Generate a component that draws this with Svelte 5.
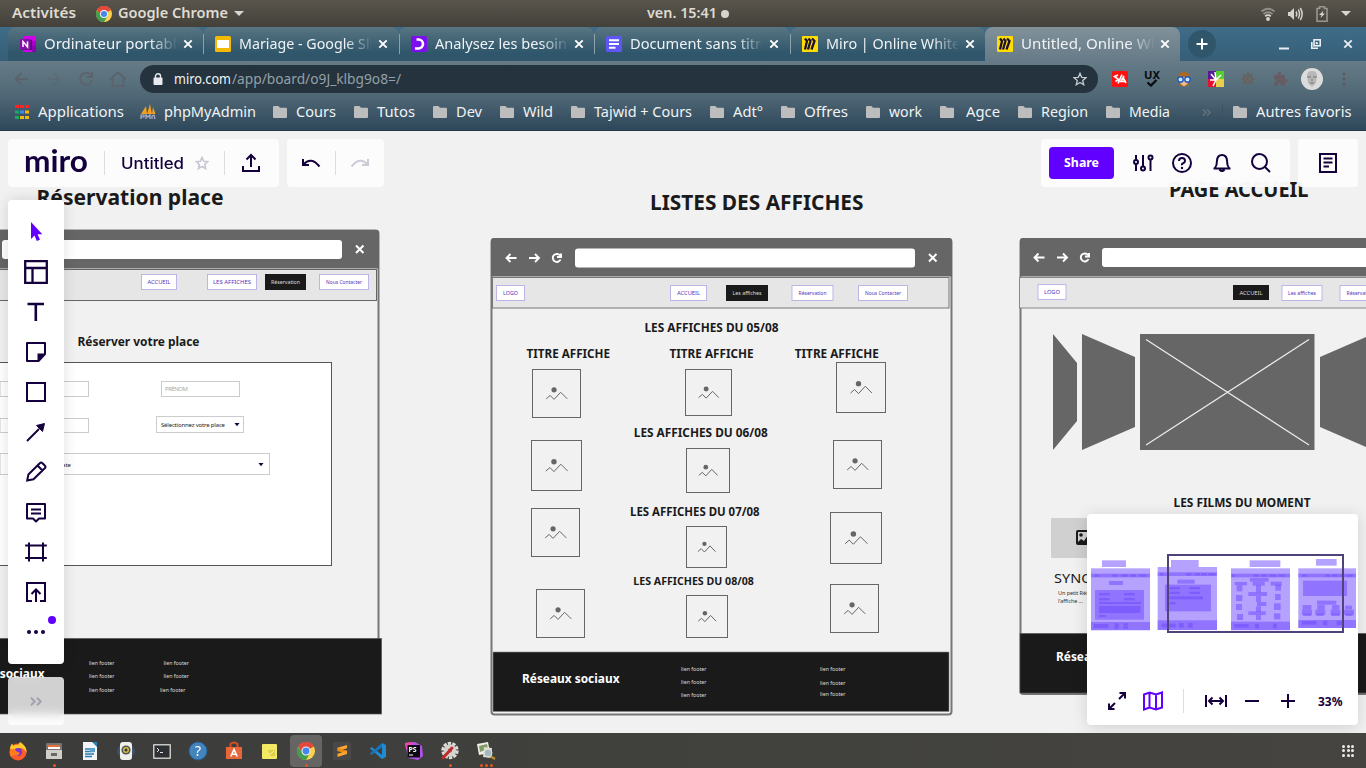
<script>
  const tabs = [
    { icon: 'onenote', title: 'Ordinateur portable', w: 141 },
    { icon: 'slides', title: 'Mariage - Google Slid', w: 143 },
    { icon: 'oc', title: 'Analysez les besoins', w: 139 },
    { icon: 'forms', title: 'Document sans titre', w: 139 },
    { icon: 'miro', title: 'Miro | Online Whiteb', w: 143 },
    { icon: 'miro', title: 'Untitled, Online Whi', w: 143, active: true }
  ];

  const bookmarks = [
    { label: 'Cours', w: 40 },
    { label: 'Tutos', w: 38 },
    { label: 'Dev', w: 26 },
    { label: 'Wild', w: 30 },
    { label: 'Tajwid + Cours', w: 98 },
    { label: 'Adt°', w: 30 },
    { label: 'Offres', w: 44 },
    { label: 'work', w: 33 },
    { label: 'Agce', w: 34, pad: 3 },
    { label: 'Region', w: 47 },
    { label: 'Media', w: 41 }
  ];

  const headings = [
    ['Réservation place', 36.5, 205, 187, 21.5],
    ['LISTES DES AFFICHES', 650, 210, 213.5, 21],
    ['PAGE ACCUEIL', 1169, 197, 139.5, 21],
    ['Réserver votre place', 77.5, 346, 122, 12.6],
    ['LES AFFICHES DU 05/08', 644.5, 332, 134, 12.6],
    ['TITRE AFFICHE', 526.5, 358, 83.5, 12.6],
    ['TITRE AFFICHE', 669.5, 358, 84, 12.6],
    ['TITRE AFFICHE', 794.8, 358, 84, 12.6],
    ['LES AFFICHES DU 06/08', 633.8, 437, 134, 12.6],
    ['LES AFFICHES DU 07/08', 630, 516, 129.5, 12.4],
    ['LES AFFICHES DU 08/08', 633.3, 585, 120.5, 11.4],
    ['LES FILMS DU MOMENT', 1173.5, 507, 137, 12.8]
  ];

  const images = [
    [532, 369, 49, 49], [685, 369, 47, 47], [836, 362, 50, 51],
    [531, 440, 51, 51], [686, 448, 44, 45], [833, 440, 49, 49],
    [531, 508, 49, 49], [686, 526, 41, 42], [830, 512, 52, 52],
    [536, 589, 49, 49], [686, 595, 42, 43], [830, 584, 49, 49]
  ];

  const buttons = [
    ['ACCUEIL', 141, 274, 36, 16, 23],
    ['LES AFFICHES', 207, 274, 50, 16, 38],
    ['Réservation', 265, 274, 41, 16, 29, true],
    ['Nous Contacter', 319, 274, 50, 16, 36],
    ['LOGO', 496, 285, 29, 16, 15],
    ['ACCUEIL', 670, 285, 37, 16, 23],
    ['Les affiches', 726, 285, 42, 16, 29, true],
    ['Réservation', 791.5, 285, 42, 16, 28],
    ['Nous Contacter', 858, 285, 50, 16, 36],
    ['LOGO', 1037.5, 284, 29, 16, 16],
    ['ACCUEIL', 1233, 285, 36, 15, 23, true],
    ['Les affiches', 1281.5, 285, 41, 16, 28],
    ['Réservation', 1339.5, 285, 42, 16, 28]
  ];

  const links = [
    [89, 665], [89, 678], [89, 692], [163.5, 665], [163.5, 678], [160, 692],
    [681, 671], [681, 684], [681, 697], [820, 671], [820, 685], [820, 696]
  ];

  const mini = [
    [186, 151, 72, 20], [153, 175, 177, 186], [153, 191, 177, 11], [164, 194, 14, 6], [217, 194, 16, 6], [243, 194, 20, 6], [270, 194, 18, 6], [297, 194, 22, 6],
    [207, 213, 42, 12], [165, 240, 147, 89], [177, 249, 32, 7], [252, 249, 32, 7], [177, 264, 32, 7], [252, 264, 32, 7], [177, 276, 126, 6], [177, 288, 124, 21], [177, 315, 21, 6],
    [153, 336, 177, 24], [161, 342, 44, 12], [224, 340, 12, 16], [250, 340, 14, 7], [250, 349, 14, 7],
    [393, 150, 83, 21], [353, 171, 178, 189], [353, 187, 178, 11], [360, 190, 10, 6], [438, 190, 16, 6], [464, 190, 16, 6], [484, 190, 16, 6], [505, 190, 22, 6],
    [412, 209, 52, 12], [375, 224, 138, 80], [388, 231, 32, 7], [448, 231, 32, 7], [388, 245, 32, 7], [448, 245, 32, 7], [388, 259, 101, 9], [388, 276, 19, 7],
    [353, 331, 178, 29], [365, 341, 42, 11], [417, 339, 14, 14], [444, 339, 14, 14],
    [629, 151, 92, 20], [573, 175, 177, 186], [573, 191, 177, 11], [576, 194, 10, 6], [641, 194, 16, 6], [664, 194, 16, 6], [689, 194, 20, 6], [716, 194, 18, 6],
    [630, 204, 56, 11], [584, 216, 37, 10], [638, 215, 36, 12], [692, 215, 33, 12], [590, 226, 17, 18], [648, 226, 15, 21], [706, 224, 17, 18], [588, 255, 19, 18], [648, 258, 15, 18], [705, 252, 17, 18],
    [625, 246, 56, 12], [588, 282, 18, 18], [648, 289, 15, 17], [702, 280, 20, 20], [651, 276, 28, 12], [625, 304, 52, 11], [591, 312, 18, 18], [648, 315, 15, 15], [702, 310, 19, 18],
    [573, 335, 177, 25], [582, 342, 44, 11], [645, 341, 12, 14], [699, 341, 11, 14],
    [828, 147, 62, 20], [775, 175, 173, 179], [775, 191, 173, 11], [786, 194, 14, 6], [856, 194, 14, 6], [876, 194, 16, 6], [898, 194, 16, 6], [920, 194, 18, 6],
    [789, 212, 132, 46], [831, 272, 58, 12], [788, 285, 26, 14], [832, 285, 22, 14], [876, 285, 22, 14], [915, 287, 21, 11], [786, 299, 30, 15], [826, 299, 30, 15], [872, 299, 29, 15], [912, 299, 30, 15], [789, 311, 25, 7], [829, 311, 22, 7], [874, 311, 25, 7], [916, 311, 22, 7],
    [775, 330, 173, 24], [786, 333, 43, 11], [849, 332, 13, 14], [890, 332, 20, 14]
  ];

  const dock = ['firefox', 'files', 'writer', 'rhythmbox', 'terminal', 'help', 'software', 'notes', 'chrome', 'sublime', 'vscode', 'phpstorm', 'settings', 'viewer'];
  const running = { files: 1, chrome: 1, settings: 1, viewer: 3 };
  const tools = ['select', 'template', 'text', 'sticky', 'shape', 'line', 'pen', 'comment', 'frame', 'upload', 'more'];
</script>

{#snippet fit(text, w, size, cls)}
  <svg class="fit {cls}" width={w} height="20"><text x="0" y="15" font-size={size} textLength={w} lengthAdjust="spacingAndGlyphs">{text}</text></svg>
{/snippet}

{#snippet chrome(size)}
  <svg width={size} height={size} viewBox="0 0 24 24">
    <circle cx="12" cy="12" r="12" fill="#fcd14d" />
    <path d="M12 12 L1.6 6 A12 12 0 0 1 22.4 6 Z" fill="#e2483b" />
    <path d="M12 6H22.5A12 12 0 0 0 1.6 6L7 15Z" fill="#e2483b" />
    <path d="M1.6 6A12 12 0 0 0 12 24L17.2 15 12 17 7 15Z" fill="#3f9e4f" />
    <circle cx="12" cy="12" r="6" fill="#f3f3f3" /><circle cx="12" cy="12" r="4.6" fill="#4587ee" />
  </svg>
{/snippet}

{#snippet folder()}
  <svg width="14" height="12" viewBox="0 0 14 12"><path d="M1 0H5.500L7 1.800H13Q14 1.800 14 2.800V11Q14 12 13 12H1Q0 12 0 11V1Q0 0 1 0Z" fill="#bdbdbd" /></svg>
{/snippet}

{#snippet favicon(name)}
  <svg width="16" height="16" viewBox="0 0 16 16">
    {#if name === 'onenote'}
      <rect x="3" width="13" height="16" fill="#d400e8" /><rect x="12" y="5" width="4" height="5" fill="#a800c8" /><rect x="12" y="10" width="4" height="6" fill="#8a00b0" />
      <rect x="2" y="4" width="10" height="10" fill="#5a0078" /><rect y="3" width="10.500" height="10.500" fill="#8410a8" />
      <path d="M3 11V5.500L7.500 11V5.500" stroke="#fff" stroke-width="1.500" fill="none" />
    {:else if name === 'slides'}
      <rect width="16" height="16" rx="1.500" fill="#f4b905" /><rect x="2" y="4" width="12" height="8" fill="#fff" />
    {:else if name === 'oc'}
      <rect width="16" height="16" rx="2" fill="#7b0ff0" /><path d="M5.500 3.500H7.500A4.300 4.300 0 0 1 7.500 12.500H4" fill="none" stroke="#fff" stroke-width="2.600" />
    {:else if name === 'forms'}
      <rect width="16" height="16" rx="1.500" fill="#5e57f5" /><path d="M3 4.200H13M3 8H13M3 11.800H9.500" stroke="#fff" stroke-width="1.900" />
    {:else}
      <rect width="16" height="16" rx="1" fill="#ffdd00" /><path d="M3 2.500L5 5 3 13.500M6.500 2.500L8.500 5 6 13.500M10 2.500L12.500 5 9.500 13.500" fill="none" stroke="#1c1033" stroke-width="2.300" />
    {/if}
  </svg>
{/snippet}

{#snippet cross(color)}
  <svg width="10" height="10" viewBox="0 0 10 10"><path d="M1.300 1.300L8.700 8.700M8.700 1.300L1.300 8.700" stroke={color} stroke-width="1.900" /></svg>
{/snippet}

{#snippet toolIcon(name)}
  <svg class="ico" width="24" height="24" viewBox="0 0 24 24">
    {#if name === 'select'}
      <path d="M7 2V19L10.500 15.500 12.800 21 16 19.800 13.600 14.300H18.300Z" fill="#6200ff" stroke="none" />
    {:else if name === 'template'}
      <path d="M1.200 1.200H22.800V22.800H1.200ZM1.200 8H22.800M8.500 8V22.500" stroke-width="2.300" />
    {:else if name === 'text'}
      <path d="M3.500 4H20M11.800 4V21" stroke-width="2.600" />
    {:else if name === 'sticky'}
      <path d="M3 3H21V14L14.500 21H3Z" stroke-linejoin="round" /><path d="M21 13.500H13.500V21Z" fill="#14003d" stroke="none" />
    {:else if name === 'shape'}
      <rect x="3" y="3" width="18" height="18" />
    {:else if name === 'line'}
      <path d="M3 21L15 9" /><path d="M20.500 3.500L18.500 11.500 12.500 5.500Z" fill="#14003d" stroke-width="1" />
    {:else if name === 'pen'}
      <path d="M3.200 20.500L4.400 14.500 16 3A1.500 1.500 0 0 1 18.200 3L21 5.800A1.500 1.500 0 0 1 21 8L9.500 19.300ZM13.500 5.500L18.500 10.500" />
    {:else if name === 'comment'}
      <path d="M3 4H21V18.500H15L12 21.500 9 18.500H3Z" stroke-linejoin="round" /><path d="M7 9.500H17M7 13.500H17" stroke-width="1.800" />
    {:else if name === 'frame'}
      <path d="M5 2.500V21.500M19 2.500V21.500M1.200 5.500H22.800M1.200 18H22.800" />
    {:else if name === 'upload'}
      <path d="M8 21H3V3H21V21H16M12 22V10M7.500 14L12 9.500 16.500 14" />
    {:else if name === 'more'}
      <g fill="#14003d" stroke="none"><circle cx="5" cy="12" r="2" /><circle cx="12" cy="12" r="2" /><circle cx="19" cy="12" r="2" /></g>
    {/if}
  </svg>
{/snippet}

{#snippet dockIcon(name)}
  {#if name === 'chrome'}
    {@render chrome(18)}
  {:else}
    <svg width="20" height="20" viewBox="0 0 20 20">
      {#if name === 'firefox'}
        <circle cx="10" cy="11" r="8.500" fill="#ff5a2a" /><path d="M2 8Q2 4 4.500 2.500L5 5Q8 3 10 4L12 1Q19 5 18.500 12 16 7 12 7L8 9Z" fill="#ffc928" /><circle cx="10" cy="11" r="4" fill="#7a35cf" /><path d="M2 9Q7 6 8 10L12 12Q10 16 6 14L3 16Q1 13 2 9Z" fill="#ff7b22" />
      {:else if name === 'files'}
        <rect x="2" y="2" width="16" height="16" rx="1" fill="#777572" /><rect x="4" y="4" width="12" height="3" fill="#e6703a" /><rect x="4" y="6" width="12" height="2" fill="#fff" /><rect x="2" y="9" width="16" height="9" fill="#d1cec8" /><rect x="7" y="12" width="6" height="3" fill="#6b6965" />
      {:else if name === 'writer'}
        <path d="M3 1H13L17 5V19H3Z" fill="#f1f5f8" /><path d="M12 1H17V6Z" fill="#2b7fb8" /><path d="M5 8H11M5 10.500H14M5 13H14M5 15.500H12" stroke="#2c7eb2" stroke-width="1.300" /><rect x="10" y="7" width="5" height="4" fill="#5b9fca" />
      {:else if name === 'rhythmbox'}
        <ellipse cx="10" cy="10" rx="9" ry="7" fill="#405366" /><rect x="4" y="1" width="12" height="18" rx="3" fill="#efefec" /><circle cx="10" cy="9" r="4.600" fill="#555" /><circle cx="10" cy="9" r="3" fill="#d1be4d" /><circle cx="10" cy="9" r="1.500" fill="#333" />
      {:else if name === 'terminal'}
        <rect x="1" y="3" width="18" height="15" rx="1" fill="#c8c8c4" /><rect x="2.500" y="4.500" width="15" height="12" fill="#2d3133" /><path d="M5 7L7 9 5 11M8 11.500H11" fill="none" stroke="#e2e2e2" />
      {:else if name === 'help'}
        <circle cx="10" cy="10" r="9" fill="#4484bd" stroke="#245e93" /><text x="10" y="15" font-size="14" fill="#fff" text-anchor="middle">?</text>
      {:else if name === 'software'}
        <path d="M2 6H18V18H2Z" fill="#e9663a" /><path d="M6.500 6V3Q10 0 13.500 3V6" fill="none" stroke="#d94e27" stroke-width="2" /><path d="M6.800 15.500L10 8.500 13.200 15.500M8 13.200H12" fill="none" stroke="#fff" stroke-width="1.600" />
      {:else if name === 'notes'}
        <rect x="2" y="3" width="15" height="15" rx="1" fill="#f3e963" /><path d="M8 9H15V15H10Z" fill="#ddcf48" /><path d="M9 14L14 10" stroke="#fff9b0" />
      {:else if name === 'sublime'}
        <rect x="1" y="1" width="18" height="18" rx="1" fill="#484848" /><path d="M15 4L5.500 6.800V10L15 7.200Z" fill="#ffa62b" /><path d="M5.500 6.800V10L15 13V9.800Z" fill="#f08a12" /><path d="M15 9.800L5.500 12.800V16L15 13Z" fill="#ffa62b" />
      {:else if name === 'vscode'}
        <path d="M14 2L18 4V16L14 18 2 7.500 3.500 6 14 14Z" fill="#208bd2" /><path d="M14 2V6L3.500 14 2 12.500Z" fill="#1577bd" />
      {:else if name === 'phpstorm'}
        <path d="M1 2L11 1 18 5 19 15 14 19 4 17Z" fill="#b551ec" /><path d="M1 2L9 1 6 10 2 8Z" fill="#ef4bab" /><rect x="3.500" y="4" width="12.500" height="12.500" fill="#0c0910" /><text x="4.500" y="10.500" font-size="7" font-weight="700" fill="#fff">PS</text><path d="M5 14H9" stroke="#fff" />
      {:else if name === 'settings'}
        <circle cx="10" cy="9.500" r="7.200" fill="none" stroke="#dedcd8" stroke-width="3" stroke-dasharray="3.300 1.200" /><circle cx="10" cy="9.500" r="6.300" fill="#d5d3cf" /><circle cx="10" cy="9.500" r="2" fill="#666" /><path d="M3 17L12 7" stroke="#c52c2c" stroke-width="3" stroke-linecap="round" />
      {:else}
        <path d="M1 3L12 1 14 12 3 14Z" fill="#f1efe5" /><path d="M3 5L11 3 12 8 4 11Z" fill="#7d9a66" /><path d="M8 6L16 7 15 17 7 16Z" fill="#dedccb" /><path d="M14 15L19 18" stroke="#b88d28" stroke-width="2.400" /><circle cx="12" cy="12" r="4" fill="#a4b8c2" stroke="#e4e4e0" />
      {/if}
    </svg>
  {/if}
{/snippet}

<div class="screen">
  <header class="system">
    <div class="sys-left">
      {@render fit('Activités', 64, 14, 'semi grey')}
      <div class="app">{@render chrome(16)}{@render fit('Google Chrome', 110, 14, 'semi grey')}<i class="caret"></i></div>
    </div>
    <div class="clock">{@render fit('ven. 15:41', 70, 13.5, 'semi grey')}<i class="dot"></i></div>
    <div class="sys-right">
      <svg width="16" height="16" viewBox="0 0 16 16" fill="none" stroke="#918f88" stroke-width="1.800"><path d="M1.500 5.500Q8 0 14.500 5.500M3.500 8Q8 4.500 12.500 8" /><path d="M5.200 10.300Q8 8 10.800 10.300" stroke="#d8d6d0" /><circle cx="8" cy="13" r="1.900" fill="#d8d6d0" stroke="none" /></svg>
      <svg width="16" height="16" viewBox="0 0 16 16" fill="none" stroke="#d5d3cd" stroke-width="1.500"><path d="M1 6H3L7 2V14L3 10H1Z" fill="#d5d3cd" stroke="none" /><path d="M9 5.500Q10.500 8 9 10.500M11.300 3.500Q13.700 8 11.300 12.500M13.300 2Q17 8 13.300 14" /></svg>
      <svg width="12" height="16" viewBox="0 0 12 16" fill="none" stroke="#99968f" stroke-width="1.600"><path d="M1 2.500H3.500V.8H8.500V2.500H11V15.200H1Z" /><path d="M7.500 4.500L3 9H5.500L4.500 12 9 7.500H6.500Z" fill="#d8d6d0" stroke="none" /></svg>
      <i class="caret"></i>
    </div>
  </header>

  <div class="browser">
    <div class="strip">
      {#each tabs as tab}
        <div class="tab" class:active={tab.active}>
          {@render favicon(tab.icon)}
          <div class="title">{@render fit(tab.title, tab.w, 14.3, 'light')}</div>
          {@render cross('#fff')}
        </div>
      {/each}
      <div class="new"><svg width="12" height="12"><path d="M6 .5V11.500M.5 6H11.500" stroke="#fff" stroke-width="2" /></svg></div>
      <div class="window-buttons">
        <svg width="10" height="12"><path d="M0 10.500H10" stroke="#e8eef2" stroke-width="2" /></svg>
        <svg width="10" height="10" fill="none" stroke="#e8eef2" stroke-width="1.600"><rect x="3" y=".8" width="6.200" height="6" /><path d="M.8 3V9.200H7M5.500 3V4.500H7" /></svg>
        {@render cross('#e8eef2')}
      </div>
    </div>

    <div class="toolbar">
      <svg class="nav" width="112" height="16" viewBox="0 0 112 16">
        <path d="M14 8H2M7.500 2L1.500 8 7.500 14" /><path d="M33 8H45M39.500 2L45.500 8 39.500 14" opacity=".45" />
        <path d="M77 4.500A6 6 0 1 0 78 9M78 1V6H73" /><path d="M96 8.500L104 1.500 112 8.500M98.500 7V15H109.500V7" />
      </svg>
      <div class="url">
        <svg width="10" height="12" viewBox="0 0 10 12"><rect x=".5" y="4.500" width="9" height="7.500" rx="1" fill="#e8eaed" /><path d="M2.500 5V3A2.500 2.200 0 0 1 7.500 3V5" fill="none" stroke="#e8eaed" stroke-width="1.400" /></svg>
        <div class="address">{@render fit('miro.com', 57, 14.3, 'light')}{@render fit('/app/board/o9J_klbg9o8=/', 169, 14.3, 'dim')}</div>
        <svg class="fav" width="14" height="14" viewBox="0 0 16 16"><path d="M8 1.500L9.900 6.100 14.900 6.500 11.100 9.700 12.300 14.600 8 12 3.700 14.600 4.900 9.700 1.100 6.500 6.100 6.100Z" fill="none" stroke="#c3c8cc" stroke-width="1.500" /></svg>
      </div>
      <div class="extensions">
        <svg width="16" height="16"><rect width="16" height="16" rx="1.500" fill="#f11" /><path d="M6 4L2.500 5.500 6.500 8.500 3.500 10.500M10 3.500L6 12.500M12 5L9 10.500H14M11.500 7.500L14 12" fill="none" stroke="#fff" stroke-width="1.700" /></svg>
        <svg width="16" height="16"><text x="0" y="8" font-size="10" font-weight="700" textLength="16" lengthAdjust="spacingAndGlyphs" fill="#080c0e">UX</text><path d="M3.500 11.500L7 14.500 12.500 9" fill="none" stroke="#080c0e" stroke-width="2.300" /></svg>
        <svg width="16" height="16"><path d="M2 9Q1 1 8 1T14 9L12 15H4Z" fill="#ad6a20" /><path d="M4 6H12V12L8 15.500 4 12Z" fill="#f0bd90" /><circle cx="4.500" cy="8.500" r="2.700" fill="#cfe5ff" stroke="#1b59bd" stroke-width="1.400" /><circle cx="11.500" cy="8.500" r="2.700" fill="#cfe5ff" stroke="#1b59bd" stroke-width="1.400" /></svg>
        <svg width="16" height="16"><rect width="8" height="8" fill="#561b96" /><rect x="8" width="8" height="8" fill="#55cf2d" /><rect y="8" width="8" height="8" fill="#e5112c" /><rect x="8" y="8" width="8" height="8" fill="#ead04a" /><path d="M8 9L3 3M8 9L7 1M8 9L13 4M8 9L2 9M8 9L5 15" stroke="#fff" stroke-width="1.500" /></svg>
        <svg width="16" height="16" fill="none" stroke="#68625f" stroke-width="2"><circle cx="8" cy="8" r="4" /><path d="M3 3L13 13M3 13L12 3M8 1V5M12 8H15M1 8H4" stroke-width="1.500" /></svg>
        <svg width="16" height="16"><path d="M2 4H6Q5 1 7.500 1T9 4H13V8Q16 7.500 15.500 10T13 11V15H9Q9 12 7 12T5.500 15H2V11Q4.500 11 4.500 9.500T2 8Z" fill="#655d63" /></svg>
        <svg width="22" height="22"><circle cx="11" cy="11" r="11" fill="#dcdcdc" /><path d="M6 8Q6 3 11 3T16 8L15 15 11 19 7 15Z" fill="#b7b7b7" /><path d="M6 9H10M12 9H16M9 15H13M10 12H12" stroke="#777" stroke-width="1.200" /></svg>
        <svg width="4" height="14" fill="#5b5a60"><circle cx="2" cy="2" r="1.500" /><circle cx="2" cy="7" r="1.500" /><circle cx="2" cy="12" r="1.500" /></svg>
      </div>
    </div>

    <div class="bookmarks">
      <div class="bookmark">
        <svg width="14" height="14"><path d="M0 1.500H4M5 1.500H9M10 1.500H14" stroke="#f22" stroke-width="3" /><path d="M0 7H4M0 12.500H4" stroke="#17a863" stroke-width="3" /><path d="M5 7H9" stroke="#4287f5" stroke-width="3" /><path d="M10 7H14M5 12.500H9M10 12.500H14" stroke="#f5b90c" stroke-width="3" /></svg>
        {@render fit('Applications', 86, 14.5, 'light')}
      </div>
      <div class="bookmark pma">
        <svg width="16" height="16"><path d="M1 10L6 2 7 10ZM7 10L10 0 12 10ZM12 10L13 3 15.500 10Z" fill="#f5a01c" /><path d="M1 15V11H4V13H1M6 15V11L8 13 10 11V15M12 15V12L14 11 15 15" fill="none" stroke="#aeb2cd" stroke-width="1.200" /></svg>
        {@render fit('phpMyAdmin', 92, 14.5, 'light')}
      </div>
      {#each bookmarks as b}
        <div class="bookmark">{@render folder()}<span style:width="{b.pad ?? 0}px" class="pad" class:none={!b.pad}></span>{@render fit(b.label, b.w, 14.5, 'light')}</div>
      {/each}
      <div class="rest">
        <svg width="9" height="7" viewBox="0 0 9 7" fill="none" stroke="#65757f" stroke-width="1.400"><path d="M1 .5L4 3.500 1 6.500M5 .5L8 3.500 5 6.500" /></svg>
        <i class="rule"></i>
        <div class="bookmark">{@render folder()}{@render fit('Autres favoris', 95.5, 14.5, 'light')}</div>
      </div>
    </div>
  </div>

  <main class="board">
    <svg class="canvas" width="1366" height="602" viewBox="0 131 1366 602">
      <!-- Reservation wireframe -->
      <rect x="-80" y="230.500" width="458.500" height="470" rx="3" fill="#f1f1f1" stroke="#777" stroke-width="2" />
      <path d="M-80 230H376Q379 230 379 233V268.500H-80Z" fill="#666" />
      <rect x="2" y="240" width="340" height="19" rx="3" fill="#fff" />
      <rect x="-80" y="269.500" width="456.500" height="31" fill="#e6e6e6" stroke="#666" />
      <path d="M356 245.500L363.500 253M363.500 245.500L356 253" stroke="#fff" stroke-width="2" />
      <rect x="-20" y="362.500" width="351.500" height="203" fill="#fff" stroke="#555" />
      <g fill="#fff" stroke="#ccc"><rect x="0" y="381.500" width="88.500" height="15" /><rect x="0" y="418.500" width="88.500" height="14" /><rect x="161.500" y="381.500" width="78" height="15" /><rect x="156.500" y="416.500" width="87" height="16" /><rect x="0" y="453.500" width="269.500" height="21" /></g>
      <g font-size="6"><text x="165" y="391" textLength="23" fill="#aaa">PRÉNOM</text><text x="161" y="426.500" textLength="64" fill="#222">Sélectionnez votre place</text><text x="71" y="466.500" text-anchor="end" fill="#222">Date</text></g>
      <path d="M234.500 423H239.500L237 426.300ZM258.500 463H263.500L261 466.300Z" fill="#14003d" />
      <rect x="-5" y="638.500" width="386.500" height="75.500" fill="#1a1a1a" stroke="#555" stroke-width=".7" />

      <!-- Poster list wireframe -->
      <rect x="491.500" y="239" width="460" height="475.500" rx="3" fill="#f1f1f1" stroke="#777" stroke-width="2" />
      <path d="M491 276.500V241Q491 238 494 238H949Q952 238 952 241V276.500Z" fill="#666" />
      <rect x="492.500" y="277.500" width="456.500" height="30.500" fill="#e6e6e6" stroke="#777" />
      <rect x="575" y="248.500" width="340" height="19" rx="3" fill="#fff" />
      <rect x="493" y="652" width="456" height="59.500" fill="#1a1a1a" stroke="#888" stroke-width=".6" />
      <g fill="none" stroke="#fff" stroke-width="2">
        <path d="M929 254L936.500 261.500M936.500 254L929 261.500" />
        <path id="arrows" d="M516.500 258H507M510.500 254L506.500 258 510.500 262M529 258H538.500M535 254L539 258 535 262M560 255.500A4 4 0 1 0 560.500 259.500M561 253.500V257H557" stroke-width="1.900" />
      </g>

      <!-- Home wireframe -->
      <rect x="1020.500" y="239" width="400" height="455" rx="3" fill="#f1f1f1" stroke="#777" stroke-width="2" />
      <path d="M1020 276.500V241Q1020 238 1023 238H1370V276.500Z" fill="#666" />
      <rect x="1019.500" y="277.500" width="400" height="30.500" fill="#e6e6e6" stroke="#888" />
      <rect x="1102" y="248" width="340" height="19" rx="3" fill="#fff" />
      <use href="#arrows" x="528" y="-.5" fill="none" stroke="#fff" />
      <g fill="#666"><path d="M1053 334L1077 363V421L1053 450ZM1082 334L1135 357V427L1082 450ZM1140 334H1314.500V450H1140ZM1320 357L1373 334V450L1320 427Z" /></g>
      <path d="M1146 339.500L1309 445M1309 339.500L1146 445" stroke="#eee" stroke-width="1.200" />
      <rect x="1051" y="518" width="60" height="40" fill="#d0d0d0" />
      <rect x="1077" y="531" width="14" height="13" rx="1" fill="none" stroke="#1a1a1a" stroke-width="2" /><circle cx="1081" cy="535" r="1.800" fill="#1a1a1a" /><path d="M1077 543L1081 539 1084 541 1088 535V544Z" fill="#1a1a1a" />
      <text x="1054" y="583" font-size="13" fill="#1a1a1a" textLength="68" lengthAdjust="spacingAndGlyphs">SYNOPSIS</text>
      <g font-size="5.500" fill="#333"><text x="1058" y="595" textLength="42">Un petit Résumé</text><text x="1058" y="603" textLength="25">l'affiche ...</text></g>
      <rect x="1020" y="633.500" width="400" height="59.500" fill="#1a1a1a" stroke="#555" stroke-width=".7" />

      {#each buttons as [label, x, y, w, h, tw, dark]}
        <rect x={x + 0.5} y={y + 0.5} width={w - 1} height={h - 1} fill={dark ? '#1a1a1a' : '#fff'} stroke={dark ? '#1a1a1a' : '#bfb4e8'} />
        <text x={x + (w - tw) / 2} y={y + 10} font-size="5.600" textLength={tw} lengthAdjust="spacingAndGlyphs" fill={dark ? '#ddd' : '#5333bd'}>{label}</text>
      {/each}
      {#each images as [x, y, w, h]}
        <rect x={x + 0.5} y={y + 0.5} width={w - 1} height={h - 1} fill="none" stroke="#666" />
        <circle cx={x + w * 0.45} cy={y + h * 0.425} r={w * 0.053} fill="#666" />
        <polyline points="{x + w * 0.29},{y + h * 0.61} {x + w * 0.37},{y + h * 0.54} {x + w * 0.45},{y + h * 0.62} {x + w * 0.585},{y + h * 0.475} {x + w * 0.72},{y + h * 0.61}" fill="none" stroke="#666" />
      {/each}
      {#each headings as [label, x, y, w, size]}
        <text {x} {y} font-size={size} font-weight="700" textLength={w} lengthAdjust="spacingAndGlyphs" fill="#1a1a1a">{label}</text>
      {/each}
      {#each links as [x, y]}
        <text {x} {y} font-size="5.600" textLength="25.500" lengthAdjust="spacingAndGlyphs" fill="#ddd">lien footer</text>
      {/each}
      <g font-size="12.600" font-weight="700" fill="#fff">
        <text x="-53" y="678" textLength="97.500" lengthAdjust="spacingAndGlyphs">Réseaux sociaux</text>
        <text x="522" y="683" textLength="97.500" lengthAdjust="spacingAndGlyphs">Réseaux sociaux</text>
        <text x="1056" y="661" textLength="97.500" lengthAdjust="spacingAndGlyphs">Réseaux sociaux</text>
      </g>
    </svg>

    <div class="overlay top">
      <div class="panel brand">
        <svg class="logo" width="64" height="30"><text x="0" y="24" font-size="30" font-weight="700" textLength="64" lengthAdjust="spacingAndGlyphs">miro</text></svg>
        <i class="sep"></i>
        <div class="name">{@render fit('Untitled', 63, 15.5, 'ink')}
          <svg width="14" height="14" viewBox="0 0 16 16"><path d="M8 1.800L9.900 6.100 14.500 6.500 11.100 9.700 12.100 14.300 8 12 3.900 14.300 4.900 9.700 1.500 6.500 6.100 6.100Z" fill="none" stroke="#c9c6d3" stroke-width="1.900" /></svg></div>
        <i class="sep"></i>
        <svg class="ico" width="20" height="20" viewBox="0 0 20 20"><path d="M2 13V18H18V13M10 14V3M5.500 6.500L10 2 14.500 6.500" /></svg>
      </div>
      <div class="panel history">
        <svg class="ico" width="20" height="16" viewBox="0 0 20 16"><path d="M2 4V10H8M2.500 9.500Q10 1 18.500 11.500" /></svg>
        <i class="sep"></i>
        <svg class="ico pale" width="20" height="16" viewBox="0 0 20 16"><path d="M18 4V10H12M17.500 9.500Q10 1 1.500 11.500" /></svg>
      </div>
      <div class="panel actions">
        <div class="share">{@render fit('Share', 35, 12.6, 'bold')}</div>
        <svg class="ico" width="22" height="20" viewBox="0 0 22 20"><path d="M4 2V6.500M4 11.500V18M11 2V13M18.500 7V18" /><circle cx="4" cy="9" r="2" /><circle cx="11" cy="15.500" r="2" /><circle cx="18.500" cy="4.500" r="2" /></svg>
        <svg class="ico" width="22" height="22" viewBox="0 0 22 22"><circle cx="11" cy="11" r="9" /><path d="M8 9Q8 6 11 6T14 8.800Q14 10.500 12.300 11.200T11 13.300" /><circle cx="11" cy="16" r="1.200" fill="#14003d" stroke="none" /></svg>
        <svg class="ico" width="22" height="22" viewBox="0 0 22 22"><path d="M2.500 16.500H19.500M4 16Q6 13.500 6 8.500 6.500 3 11 3T16 8.500Q16 13.500 18 16M8.500 17.500Q11 20.500 13.500 17.500" /></svg>
        <svg class="ico" width="22" height="22" viewBox="0 0 22 22"><circle cx="9.500" cy="9.500" r="7.500" /><path d="M15 15L20 20" /></svg>
      </div>
      <div class="panel sheet">
        <svg class="ico" width="20" height="22" viewBox="0 0 20 22"><path d="M2 2H18V20H2Z" /><path d="M5.500 6.500H14.500M5.500 10.500H14.500M5.500 14.500H11" stroke-width="1.800" /></svg>
      </div>
    </div>

    <div class="overlay tools">
      {#each tools as t}
        <div class="tool">{@render toolIcon(t)}{#if t === 'more'}<i class="badge"></i>{/if}</div>
      {/each}
    </div>
    <div class="overlay expand"><svg width="12" height="9" viewBox="0 0 12 9" fill="none" stroke="#a5a2b0" stroke-width="2"><path d="M1 .8L4.800 4.500 1 8.200M7 .8L10.800 4.500 7 8.200" /></svg></div>

    <div class="overlay minimap">
      <svg width="271" height="163" viewBox="141 12 813 489">
        {#each mini as [x, y, width, height]}
          <rect {x} {y} {width} {height} fill="#6b45ff" opacity=".5" />
        {/each}
        <rect x="384" y="135" width="525" height="231" fill="none" stroke="#50427a" stroke-width="6" />
      </svg>
      <div class="zoombar">
        <svg class="ico" width="20" height="20" viewBox="0 0 20 20"><path d="M12 8L17.500 2.500M12.500 2H18V7.500M8 12L2.500 17.500M2 12.500V18H7.500" /></svg>
        <svg class="ico violet" width="22" height="20" viewBox="0 0 22 20"><path d="M2 3.500L7.500 1.500 14 3.500 20 1.500V16.500L14 18.500 7.500 16.500 2 18.500ZM7.500 1.500V16.500M14 3.500V18.500" /></svg>
        <i class="sep"></i>
        <svg class="ico" width="24" height="14" viewBox="0 0 24 14"><path d="M2 1V13M22 1V13M5 7H19M8.500 3.500L5 7 8.500 10.500M15.500 3.500L19 7 15.500 10.500" /></svg>
        <svg class="ico" width="14" height="14"><path d="M0 7H14" /></svg>
        <svg class="ico" width="14" height="14"><path d="M0 7H14M7 0V14" /></svg>
        {@render fit('33%', 24.5, 12, 'bold ink')}
      </div>
    </div>
  </main>

  <footer class="dock">
    {#each dock as d}
      <div class="launcher" class:current={d === 'chrome'}>
        {@render dockIcon(d)}
        <div class="dots">{#each Array(running[d] ?? 0) as _}<i></i>{/each}</div>
      </div>
    {/each}
    <div class="grid">{#each Array(9) as _}<i></i>{/each}</div>
  </footer>
</div>

<style>
  :global(body) { margin: 0; overflow: hidden; }
  .screen { width: 1366px; height: 768px; display: flex; flex-direction: column; font-family: 'Noto Sans', 'Open Sans', sans-serif; overflow: hidden; }
  svg { display: block; flex: none; }
  i { display: block; flex: none; }
  .fit { overflow: visible; font-family: 'Noto Sans', 'Open Sans', sans-serif; }
  .grey { fill: #dfdbd2; }
  .light { fill: #f0f3f5; }
  .dim { fill: #94a0a8; }
  .semi { font-weight: 600; }
  .bold { font-weight: 700; fill: #fff; }
  .ink { fill: #14003d; }
  .ink:not(.bold) { font-family: Inter, sans-serif; font-weight: 500; margin-top: 1px; }

  .system { height: 27px; display: grid; grid-template-columns: 1fr auto 1fr; align-items: center; background: linear-gradient(#59554d, #43413a); box-sizing: border-box; padding: 0 15px 0 12px; }
  .sys-left, .app, .clock, .sys-right { display: flex; align-items: center; }
  .sys-left { gap: 20px; }
  .app { gap: 6px; }
  .clock { gap: 4px; padding-left: 13px; }
  .sys-left .fit, .clock .fit { margin-top: -1px; }
  .sys-right { justify-content: flex-end; gap: 13px; }
  .sys-right svg:first-child { margin-right: -2px; }
  .caret { border: 5px solid transparent; border-top-color: #d8d6d0; border-bottom: 0; }
  .dot { width: 8px; height: 8px; border-radius: 50%; background: #d6d3cc; }

  .browser { height: 104px; background: linear-gradient(#80919a, #667b87 34px, #506876 68px, #2e475a 103px, #26374a 103px); }
  .strip { height: 34px; display: flex; background: linear-gradient(#3f6c88, #365e78); padding-left: 8px; }
  .tab { width: 195.4px; height: 34px; box-sizing: border-box; display: flex; align-items: center; padding-left: 12px; background: linear-gradient(#587582, #2f566b 26px); border-radius: 8px 8px 0 0; position: relative; }
  .tab:not(:first-child):not(.active)::before { content: ''; position: absolute; left: 0; top: 7px; width: 1px; height: 20px; background: #8ca0ab; }
  .tab.active { background: linear-gradient(#80919a, #667b87); }
  .title { width: 132px; margin: 0 7px 0 8px; height: 20px; overflow: hidden; mask-image: linear-gradient(90deg, #000 106px, transparent 134px); }
  .new { width: 28px; height: 28px; margin: 3px 0 0 8px; border-radius: 50%; background: #2f566b; display: grid; place-items: center; }
  .window-buttons { display: flex; align-items: center; gap: 22px; margin-left: auto; padding-right: 13px; }

  .toolbar { height: 36px; display: flex; align-items: center; padding-left: 14px; }
  .nav { fill: none; stroke: #5c636b; stroke-width: 1.8; }
  .url { width: 958px; height: 28px; margin-left: 14px; box-sizing: border-box; border-radius: 14px; background: #24333d; display: flex; align-items: center; padding: 0 11px 0 13px; }
  .address { display: flex; gap: 1px; margin-left: 11px; }
  .fav { margin-left: auto; }
  .extensions { flex: 1; display: flex; align-items: center; gap: 16px; padding-left: 14px; }
  .extensions svg:nth-child(7) { margin-left: -3px; }
  .extensions svg:nth-child(8) { margin-left: 3px; }

  .bookmarks { height: 33px; box-sizing: border-box; display: flex; align-items: center; gap: 18px; padding: 0 15px 3px; }
  .bookmark { display: flex; align-items: center; gap: 9px; }
  .pma { gap: 8px; margin-left: -2px; }
  .bookmark:nth-child(3) { margin-left: -1px; }
  .pad.none { display: none; }
  .pad { margin-right: -9px; }
  .rest { display: flex; align-items: center; margin-left: auto; gap: 11px; }
  .rule { width: 1px; height: 14px; background: #3b5263; }

  .board { height: 602px; position: relative; background: #f1f1f1; overflow: hidden; }
  .canvas text { font-family: 'Noto Sans', 'Open Sans', sans-serif; }
  .overlay { position: absolute; }
  .ico { fill: none; stroke: #14003d; stroke-width: 2; }
  .pale { stroke: #cecbd7; }
  .violet { stroke: #6200ff; }
  .sep { width: 1px; height: 24px; background: #dddce2; }
  .top { left: 8px; right: 8px; top: 8px; display: flex; gap: 8px; }
  .panel { height: 48px; box-sizing: border-box; border-radius: 4px; background: rgba(253, 253, 253, 0.93); backdrop-filter: blur(8px); display: flex; align-items: center; }
  .brand { width: 271px; padding: 0 18px 0 16px; justify-content: space-between; }
  .logo text { font-family: Lato, sans-serif; fill: #14003d; }
  .name { display: flex; align-items: center; gap: 11px; }
  .history { width: 97px; padding: 0 14px; justify-content: space-between; }
  .actions { width: 249px; margin-left: auto; padding: 0 18px 0 8px; justify-content: space-between; }
  .share { width: 65px; height: 32px; border-radius: 4px; background: #6200ff; display: grid; place-items: center; }
  .share .fit { margin-top: -2px; }
  .sheet { width: 60px; justify-content: center; }
  .tools { left: 8px; top: 69px; width: 56px; height: 464px; box-sizing: border-box; padding-top: 12px; border-radius: 4px; background: #fff; box-shadow: 0 0 14px rgba(0, 0, 0, 0.13); }
  .tool { height: 40px; display: grid; place-items: center; position: relative; }
  .badge { position: absolute; right: 8px; top: 4px; width: 8px; height: 8px; border-radius: 50%; background: #6200ff; }
  .expand { left: 8px; top: 546px; width: 56px; height: 48px; border-radius: 4px; background: rgba(255, 255, 255, 0.8); backdrop-filter: blur(5px); display: grid; place-items: center; }
  .minimap { left: 1087px; top: 383px; width: 271px; height: 211px; border-radius: 4px; background: #fff; box-shadow: 0 2px 16px rgba(0, 0, 0, 0.14); }
  .zoombar { height: 48px; display: grid; grid-template-columns: 36px 36px 25px 40px 32px 40px 1fr; align-items: center; justify-items: center; padding: 0 16px 0 12px; }
  .zoombar .fit { justify-self: end; margin-top: -1px; }

  .dock { height: 35px; display: flex; background: linear-gradient(90deg, #3c3d3b, #454440); padding-right: 12px; }
  .launcher { width: 36px; height: 35px; display: grid; place-items: center; position: relative; }
  .current::before { content: ''; position: absolute; inset: 2px 2px 1px; border-radius: 4px; background: #666563; }
  .launcher > :global(svg) { position: relative; }
  .dots { position: absolute; bottom: 1px; left: 0; right: 0; display: flex; justify-content: center; gap: 2px; }
  .dots i { width: 3px; height: 3px; border-radius: 50%; background: #e95420; }
  .grid { margin: auto 0 auto auto; display: grid; grid-template-columns: repeat(3, 3px); gap: 1.5px; }
  .grid i { width: 3px; height: 3px; border-radius: 50%; background: #eeede9; }
</style>
